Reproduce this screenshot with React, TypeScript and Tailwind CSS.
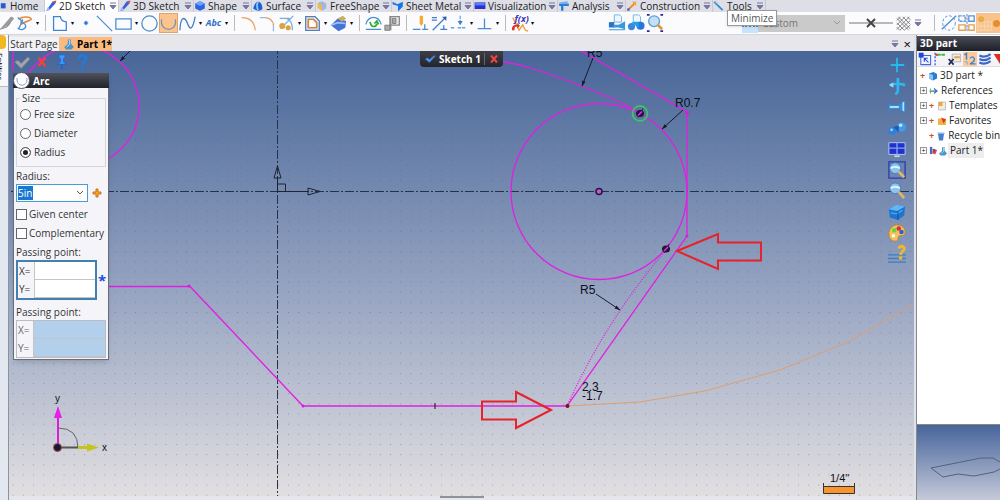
import type { ReactNode } from "react";

const icons: Record<string, ReactNode> = {
  pencil: <><path d="M2 18L13 2l5 3L7 17z" fill="#3a5fdc" /><path d="M2 18l2-6 5 4z" fill="#9fc0f0" /><path d="M13 2l5 3 1-4z" fill="#d2473e" /></>,
  blob: <><path d="M2 6l8-4 8 4v8l-8 4-8-4z" fill="#2b63e0" /><path d="M2 6l8 4 8-4-8-4z" fill="#6ea2ff" /></>,
  surface: <><path d="M2 14C5 4 8 2 11 3c5 1 7 8 6 13-5 3-10 2-15-2z" fill="#1f5fd0" /><path d="M10 3c-2 4-2 9 0 14" stroke="#8fc1ff" strokeWidth="3" fill="none" /></>,
  free: <><path d="M3 5l7-3 7 4v8l-7 4-7-5z" fill="#9db8e4" /><path d="M3 5l7 4v9l-7-5z" fill="#f3b93e" /></>,
  sheet: <path d="M1 3l8 4 9-4v8l-8 8V10L1 7z" fill="#1477e8" />,
  monitor: <><path d="M1 4h18v11H1z" fill="#2733cc" /><path d="M2 5h16v4H2z" fill="#5d7cff" /></>,
  analysis: <><path d="M2 6h16v4H9v8H5v-8H2z" fill="#2f7bd8" /><path d="M2 4l14-2v4H2z" fill="#6fb0f5" /></>,
  construction: <><path d="M3 17L14 6" stroke="#f08a1c" strokeWidth="3" /><path d="M10 3h7v7z" fill="#f0a43c" /><path d="M2 14h4v4H2z" fill="#3c6bd6" /></>,
  tools: <><path d="M2 3l14 14" stroke="#3c86d2" strokeWidth="3" /><path d="M3 2l5 5" stroke="#9ec4e8" strokeWidth="2" /></>,
  home: <path d="M2 3h12v13H2z" fill="#2a5ad0" />,
  trowel: <><path d="M1 18L15 2l4 2-7 9z" fill="#9a9a9a" /><path d="M1 18l9-3 4-5" stroke="#777" fill="none" /></>,
  sketch: <><path d="M3 5c5-4 14-3 15 0-3 3-7 2-12 6" stroke="#e78a3e" strokeWidth="2" fill="none" /><path d="M2 3l6 5M8 5L3 17M5 8c8 2 8 7 3 9-4 1-5-1-6-2" stroke="#4d8fd4" strokeWidth="1.500" fill="none" /></>,
  profile: <path d="M3 2h8q1 6 7 6v10H3z" stroke="#3f86cf" fill="#fafcff" strokeWidth="1.500" />,
  point: <path d="M10 4v12M4 10h12M7 7h6v6H7z" stroke="#2f74dd" fill="#2f74dd" strokeWidth="1.500" />,
  line: <path d="M1 1l18 18" stroke="#4b8dd0" strokeWidth="1.500" />,
  rect: <path d="M1 4.500h18v12H1z" stroke="#4b8dd0" strokeWidth="1.500" fill="none" />,
  circle: <circle cx="10" cy="10" r="9" stroke="#4b8dd0" strokeWidth="1.500" fill="none" />,
  arc: <path d="M2 5C-1 21 21 21 18 5" stroke="#7a94b4" strokeWidth="1.500" fill="none" />,
  spline: <path d="M1 18C2 0 7 2 10 10s6 8 9-8" stroke="#3f7dc4" strokeWidth="1.500" fill="none" />,
  fillet: <path d="M2 3c10 0 15 5 16 15" stroke="#e6a15c" strokeWidth="1.500" fill="none" />,
  corner: <><path d="M1 3h6M17 11v8" stroke="#8fbfe8" strokeWidth="1.500" /><path d="M7 3c5 0 10 4 10 9" stroke="#e6a15c" strokeWidth="1.500" fill="none" /></>,
  trim: <><path d="M2 4h12M18 1L3 16M10 4c6 2 7 7 7 14" stroke="#79aee0" strokeWidth="1.500" fill="none" /><circle cx="5" cy="13" r="3.500" fill="#dca23e" /><circle cx="12" cy="15" r="3" fill="#dca23e" /></>,
  offset: <><path d="M2 2h11l5 5v11H2z" stroke="#4b7fc0" strokeWidth="1.500" fill="#eaf1f8" /><path d="M5 5h6l4 4v6H5z" stroke="#d78237" strokeWidth="2" fill="#fff" /></>,
  solid: <><path d="M1 12l8-8 10 3-1 8-8 4z" fill="#4673d8" /><path d="M1 12l8-3 9 1" stroke="#a4c0ff" strokeWidth="2" fill="none" /><path d="M9 4l6-3 4 3-5 4z" fill="#c9b15a" /></>,
  rotate: <><path d="M1 11C4 0 16 0 19 11M1 17h18" stroke="#4b8dd0" strokeWidth="1.500" fill="none" /><path d="M6 8c1 7 7 7 8 2M11 10l3-3 2 4" stroke="#2fae38" strokeWidth="2" fill="none" /></>,
  flag: <><path d="M7 2h11v10H7zM8 3v15" stroke="#888" strokeWidth="1.500" fill="#e8e8e8" /><path d="M1 12h6v6H1zM10 4h4v6h-4z" fill="#aaa" stroke="#777" /></>,
  dimension: <><path d="M9 1h4v9l-2 3-2-3z" fill="#f0ac34" /><path d="M1 17h9M12 17h7M15 17v-6" stroke="#4b8dd0" strokeWidth="1.500" /></>,
  relation: <><path d="M1 3h6M1 6h6M2 18L18 2M11 17h8M15 17v-5" stroke="#3f7fc8" strokeWidth="1.500" /><path d="M13 2h5v5z" fill="#2a5fa8" /></>,
  attach: <><path d="M1 15h5M9 15h10M12 1v8" stroke="#6aa5dc" strokeWidth="1.500" strokeDasharray="4 1" /><path d="M9 7h6l-3 5z" fill="#3f7fc8" /></>,
  perp: <path d="M2 16h16M10 16V4" stroke="#4b8dd0" strokeWidth="1.500" />,
  plot: <><path d="M2 4l4 8 3 6 4-6 3 6 3 1" stroke="#e8a03c" fill="none" strokeWidth="1.500" /><path d="M1 18c0-6 3-6 6-6v-2l3 3-3 3v-2c-3 0-3 1-3 4z" fill="#dd3427" /></>,
  camera: <><path d="M7 1h6l2 2v6H7z" fill="#edf7ff" stroke="#6cb1e5" /><path d="M1 9h6v6H1z" fill="#2a72c4" /><path d="M6 12h6l7-4v9l-7-2H6zM1 17h18v1H1z" fill="#3b98dc" /></>,
  balls: <><path d="M7 1h6l2 2v6H7z" fill="#edf7ff" stroke="#6cb1e5" /><circle cx="5" cy="14" r="4" fill="#3c87dd" /><circle cx="15" cy="13" r="4.500" fill="#2776d8" /><path d="M5 9h8v7z" fill="#1e9ee9" /></>,
  zoomfit: <><path d="M1 1h3M16 1h3M1 19h3M16 19h3" stroke="#28289a" strokeWidth="2" /><circle cx="9" cy="8" r="6" fill="#c3e0f6" stroke="#5e9fd4" strokeWidth="1.500" /><path d="M13 12l5 5" stroke="#d99a3c" strokeWidth="3" /></>,
  dashed: <><path d="M2 17L18 2" stroke="#4b8dd0" strokeWidth="1.500" /><ellipse cx="10" cy="10" rx="7" ry="8" stroke="#4b8dd0" strokeDasharray="3 2" fill="none" /></>,
  grid4: <><path d="M1 2h7v6H1z" stroke="#5a97d6" strokeDasharray="3 1" strokeWidth="1.500" /><path d="M12 2h6v6h-6z" stroke="#5a97d6" strokeWidth="1.500" /><path d="M1 12h7v6H1zM12 12h6v6h-6z" stroke="#e6a14e" strokeWidth="1.500" /><path d="M10 0v20" stroke="#4c79b8" strokeDasharray="3 1" /></>,
  snap: <><path d="M2 8h16v10H2zM6 8v10M10 8v10M14 8v10M2 13h16" stroke="#f5d9b8" fill="none" /><circle cx="6" cy="5" r="3.500" fill="#e9ac46" /></>,
  check: <path d="M1 10l4-2 4 4 8-8 3 2L9 18z" fill="#a2a6ab" stroke="#83878e" />,
  checkBlue: <path d="M2 10l4-2 3 3 8-7 2 1L9 16z" fill="#4f9bf2" stroke="#2b66b8" />,
  cross: <path d="M4 3l12 14M16 3L4 17" stroke="#f0433c" strokeWidth="4" />,
  pin: <><path d="M6 1h8v3l-2 2v4l4 3H4l4-3V6L6 4z" fill="#3f97f8" stroke="#1c62ca" /><path d="M10 13v6" stroke="#1c62ca" strokeWidth="2" /></>,
  help: <><path d="M6 6c0-6 9-5 9 0 0 3-4 3-4 7" stroke="#1a7fe0" strokeWidth="3" fill="none" /><circle cx="11" cy="17" r="2" fill="#1a7fe0" /></>,
  cyanPlus: <path d="M10 2v16M3 10h15" stroke="#25b9f2" strokeWidth="2" />,
  axisMove: <><path d="M11 1v14q0 3-3 4M2 9q8-3 17 0" stroke="#2fb7f4" strokeWidth="3" fill="none" /><path d="M1 9l5-3v6z" fill="#8be0ff" /></>,
  viewCam: <><path d="M1 6l4 2h7l7-5v13l-7-4H5l-4 2z" fill="#2e8ee2" /><path d="M2 9h10v2H2zM16 5l2-1v11l-2-1z" fill="#a9e0ff" /></>,
  viewBalls: <><circle cx="5" cy="13" r="4.500" fill="#3080da" /><circle cx="15" cy="9" r="5" fill="#3d9cec" /><path d="M6 9l6-2v8z" fill="#1a5fc0" /><circle cx="14" cy="7" r="2" fill="#b6e4ff" /><circle cx="4" cy="12" r="1.500" fill="#9dd2fb" /></>,
  viewGrid: <><path d="M1 3h18v13H1z" fill="#2232c8" stroke="#b9d1ff" /><path d="M10 3v13M1 9h18" stroke="#7ca2ff" strokeWidth="1.500" /><path d="M7 18h6" stroke="#c5cfe4" strokeWidth="2" /></>,
  lensBox: <><path d="M1 1h18v18H1z" fill="none" stroke="#2b3fae" strokeWidth="1.500" /><circle cx="8" cy="8" r="6" fill="#8fc3ee" stroke="#3c7fc4" /><path d="M3 8q5-3 10 0" stroke="#e6f5ff" strokeWidth="2" fill="none" /><path d="M12 12l6 6" stroke="#e0b667" strokeWidth="3" /></>,
  lens: <><circle cx="8" cy="7" r="6" fill="#8fc3ee" stroke="#3c7fc4" /><path d="M3 7q5-3 10 0" stroke="#e6f5ff" strokeWidth="2" fill="none" /><path d="M12 11l6 7" stroke="#e0b667" strokeWidth="3" /></>,
  cube: <><path d="M1 7l8-5 10 2-1 10-7 5-9-3z" fill="#1f74d0" /><path d="M1 7l9 2 9-5-10-2z" fill="#62b8f4" /><path d="M3 11l7 1 6-4" stroke="#3fb0f2" strokeWidth="1.500" /><path d="M11 9v10" stroke="#0e4fa0" /></>,
  palette: <><path d="M10 1c6 0 9 4 9 8s-3 4-6 4 0 6-5 6-7-4-7-8 3-10 9-10z" fill="#f4c25b" stroke="#b98530" /><circle cx="7" cy="7" r="2.500" fill="#6cd13e" /><circle cx="12" cy="5" r="2.500" fill="#dc2c3e" /><circle cx="15" cy="9" r="2.500" fill="#2f5fd0" /><circle cx="6" cy="13" r="2" fill="#fff" /></>,
  linesHelp: <><path d="M0 11h20M0 15h20M0 19h20" stroke="#3b7fc4" strokeWidth="1.500" /><path d="M12 4c1-4 7-3 6 1-1 2-4 2-4 6" stroke="#f0bb23" strokeWidth="3" fill="none" /><circle cx="14" cy="14.500" r="2" fill="#f0bb23" /></>,
  part: <><path d="M8 2h5v7l5 6-4 4H5l-3-4 6-5z" fill="#4b95c8" /><path d="M9 3h2v8l-5 4" stroke="#bfe1f4" strokeWidth="1.500" fill="none" /></>,
  treeSelect: <><path d="M4 5h14v13H4z" fill="#eef3ff" stroke="#4a63d8" strokeWidth="1.500" /><path d="M1 1h7v7H1z" fill="#2343d8" /><path d="M9 9l6 6M9 14V9h5" stroke="#2343d8" strokeWidth="1.500" fill="none" /></>,
  treeList: <><path d="M3 1v18" stroke="#3a68d8" strokeWidth="2" strokeDasharray="3 2" /><path d="M6 4h12" stroke="#40b840" strokeWidth="3" strokeDasharray="5 1" /><circle cx="5" cy="4" r="2" fill="#dc4b32" /></>,
  treeDelete: <><path d="M6 3h12v11H6z" fill="#f5ead4" stroke="#9aa3b8" /><path d="M9 6h8v3H9z" fill="#dca75b" /><path d="M1 10l7 8M8 10l-7 8" stroke="#222a55" strokeWidth="2.500" /></>,
  treeNum: <><path d="M2 4l3-2v9M10 9q4-4 6 0t-6 8h8" stroke="#3b86d2" strokeWidth="2" fill="none" /><path d="M2 14h4v4" stroke="#5fa0dc" fill="none" /></>,
  layers: <path d="M2 5q8 4 16-2M2 10q8 4 16-2M2 15q8 4 16-2" stroke="#3d67c4" strokeWidth="3" fill="none" />,
  filter: <path d="M1 3h18l-9 14z" fill="#dc2d25" />,
  cubeSmall: <><path d="M2 5l9-3 7 4v9l-8 4-8-4z" fill="#2c7bd0" /><path d="M2 5l8 3v10l-8-3z" fill="#8cc5f0" /></>,
  refs: <><path d="M1 10h14M10 5l6 5-6 5" stroke="#3d75bc" strokeWidth="2.500" fill="none" /><path d="M3 5v10" stroke="#76b852" strokeWidth="2" /></>,
  doc: <><path d="M3 2h14v16H3z" fill="#f6ecd2" stroke="#8a93ac" /><path d="M3 2h8v8H3z" fill="#eba54a" /></>,
  fav: <><path d="M2 5h16v13H2z" fill="#f3b244" /><path d="M8 3l10 4-5 8z" fill="#d93a32" /></>,
  bin: <><path d="M4 5h12l-2 14H6z" fill="#477fd0" /><path d="M3 3h14v3H3z" fill="#8db6ee" /></>,
  partDoc: <><path d="M2 2h5v16H2z" fill="#4f68c8" /><path d="M8 6l10 3-4 10-7-3z" fill="#d24a50" /><path d="M8 6l6 2-2 6z" fill="#3a50b8" /></>,
  hatch: <path d="M1 3l16 16M1 9l10 10M1 15l4 4M3 1l16 16M9 1l10 10M15 1l4 4M1 6l5-5M1 12L12 1M1 18L18 1M5 19L19 6M11 19l8-7" stroke="#666" />,
};

function Icon({ name, className = "size-4" }: { name: string; className?: string }) {
  return <svg viewBox="0 0 20 20" className={`${className} shrink-0`} fill="none" aria-hidden="true">{icons[name]}</svg>;
}

const tabs = [
  { label: "Home", icon: "home", width: "w-[45px]", caret: false },
  { label: "2D Sketch", icon: "pencil", width: "w-[74px]", caret: true },
  { label: "3D Sketch", icon: "pencil", width: "w-[75px]", caret: true },
  { label: "Shape", icon: "blob", width: "w-[58px]", caret: true },
  { label: "Surface", icon: "surface", width: "w-[64px]", caret: true },
  { label: "FreeShape", icon: "free", width: "w-[76px]", caret: true },
  { label: "Sheet Metal", icon: "sheet", width: "w-[82px]", caret: true },
  { label: "Visualization", icon: "monitor", width: "w-[84px]", caret: true },
  { label: "Analysis", icon: "analysis", width: "w-[68px]", caret: true },
  { label: "Construction", icon: "construction", width: "w-[87px]", caret: true },
  { label: "Tools", icon: "tools", width: "w-[53px]", caret: true },
];

const tools = [
  "sketch", ">", "|", "profile", ">", "point", "line", "rect", ">", "circle", "arc", "spline", ">", "Abc", ">", "|",
  "fillet", "corner", "trim", ">", "offset", ">", "solid", ">", "|", "rotate", "flag", "|",
  "dimension", "relation", "attach", ">", "perp", ">", "|", "plot", ">",
];

const views = ["cyanPlus", "axisMove", "viewCam", "viewBalls", "viewGrid", "lensBox", "lens", "cube", "palette", "linesHelp"];

const tree = [
  { label: "3D part *", icon: "cubeSmall", expand: false, plus: true, indent: false },
  { label: "References", icon: "refs", expand: true, plus: false, indent: false },
  { label: "Templates", icon: "doc", expand: true, plus: true, indent: false },
  { label: "Favorites", icon: "fav", expand: true, plus: true, indent: false },
  { label: "Recycle bin", icon: "bin", expand: false, plus: true, indent: true },
];

function Caret() {
  return (
    <svg viewBox="0 0 8 8" className="h-2 w-2 shrink-0" aria-hidden="true">
      <path d="M1 1h6M1 3.500h6L4 7z" stroke="#7876a0" fill="#7876a0" />
    </svg>
  );
}

function Ribbon() {
  return (
    <nav className="relative flex h-3 shrink-0 items-center bg-[#dedee6] text-[10px] leading-3">
      {tabs.map((t) => (
        <button key={t.label} className={`flex h-3 shrink-0 items-center gap-[2px] border-r border-[#c9c9d4] whitespace-nowrap text-[#222] ${t.width} ${t.label === "2D Sketch" ? "bg-white" : ""}`}>
          <Icon name={t.icon} className={t.label === "Home" ? "size-2" : "size-3"} />
          <span>{t.label}</span>
          {t.caret && <span className="mr-px ml-auto"><Caret /></span>}
        </button>
      ))}
      <div role="tooltip" className="absolute top-[10px] left-[727px] z-20 border border-[#999] bg-white px-[3px] text-[10px] leading-[14px] text-[#555] shadow">
        Minimize
      </div>
    </nav>
  );
}

function Tool({ name }: { name: string }) {
  if (name === "|") return <span className="mx-1 h-4 w-px shrink-0 bg-[#bbb]" />;
  if (name === ">") return <button aria-label="More" className="w-[7px] shrink-0 text-[6px] leading-3">▾</button>;
  return (
    <button aria-label={name} className={`flex h-5 w-[19px] shrink-0 items-center justify-center ${name === "arc" ? "border border-[#e0a56e] bg-[#fac48c]" : ""}`}>
      {name === "Abc" ? (
        <span className="text-[9px] font-bold text-[#2f6fc0] italic">Abc</span>
      ) : name === "plot" ? (
        <span className="relative">
          <Icon name="plot" className="size-[18px]" />
          <span className="absolute -top-px left-1 text-[9px] leading-3 font-bold text-[#3a35b8] italic">f(x)</span>
        </span>
      ) : (
        <Icon name={name} className={name === "point" ? "size-2" : "size-[17px]"} />
      )}
    </button>
  );
}

function Toolbar() {
  return (
    <div className="flex h-[23px] shrink-0 items-center overflow-hidden border-b border-[#d5d5dc] bg-[#fbfbfe]">
      <Icon name="trowel" className="-ml-px size-4" />
      {tools.map((t, i) => <Tool key={i} name={t} />)}
      <div className="ml-[72px] flex shrink-0 items-center gap-px">
        <Icon name="camera" className="size-[18px]" />
        <Icon name="balls" className="size-[18px]" />
        <Icon name="zoomfit" className="size-[18px]" />
      </div>
      <div className="ml-auto flex h-full shrink-0 items-center">
        <div className="mt-3 h-2 w-4 border-t-2 border-dotted border-[#4b8dd0] bg-[#c9e4f8]" />
        <div className="mr-1 flex h-[17px] w-[87px] items-center bg-[#cacaca] pr-1 pl-1">
          <select aria-label="Style" disabled className="min-w-0 flex-1 appearance-none text-[10px] text-[#777]">
            <option>Custom</option>
          </select>
          <svg viewBox="0 0 8 8" className="size-2" aria-hidden="true"><path d="M1 2l3 3 3-3" stroke="#999" fill="none" /></svg>
        </div>
        <svg className="h-4 w-[44px]" viewBox="0 0 44 16" aria-hidden="true">
          <path d="M0 8h44" stroke="#777" />
          <path d="M18 4l8 8M26 4l-8 8" stroke="#444" strokeWidth="2" />
        </svg>
        <Icon name="hatch" className="mx-[3px] size-[15px]" />
        <Caret />
        <span className="mr-[5px] ml-3 h-4 w-px bg-[#bbb]" />
        <Icon name="dashed" className="size-[18px]" />
        <Icon name="grid4" className="size-[18px]" />
        <div className="flex h-5 w-6 items-center bg-[#fbc38c]">
          <Icon name="snap" className="size-[17px]" />
          <span className="size-[7px] rounded-full bg-[#e88d2c]" />
        </div>
      </div>
    </div>
  );
}

function Marker({ x, y }: { x: number; y: number }) {
  return (
    <g transform={`translate(${x} ${y})`}>
      <ellipse rx="4" ry="3.500" fill="#25133a" />
      <path d="M-4 0q4-4 8 0M-2 4L3-5" stroke="#25133a" />
      <path d="M-2 2L2-2" stroke="#e636e6" strokeWidth="1.500" />
    </g>
  );
}

function Drawing() {
  return (
    <svg className="absolute inset-0 h-full w-full" aria-label="Sketch 1 drawing">
      <defs>
        <pattern id="dots" x="3.600" y="7.300" width="10.200" height="10.150" patternUnits="userSpaceOnUse">
          <rect width="1" height="1" fill="#4f5b78" opacity="0.450" />
        </pattern>
        <marker id="tip" viewBox="0 0 10 6" refX="9" refY="3" markerWidth="6" markerHeight="4" orient="auto">
          <path d="M0 0l10 3L0 6z" fill="#151b2b" />
        </marker>
      </defs>
      <rect width="100%" height="100%" fill="url(#dots)" />
      <g transform="translate(-9 -51)" fill="none">
        <g stroke="#26324a" strokeDasharray="9 2 2 2">
          <path d="M0 191.500H3000" />
          <path d="M277.500 0V2000" />
        </g>
        <g stroke="#1d2433">
          <path d="M277.500 191.500v-14M274 178l3.500-12 3.500 12zM277.500 191.500h31M308 188l12 3.500-12 3.500zM277.500 184h8v7.500" />
        </g>

        <g stroke="#e11fe1" strokeWidth="1.300">
          <circle cx="79" cy="106" r="60" />
          <path d="M13 51v20" />
          <path d="M100 286.500h90L303 406h264l120-170V112L578 49" />
          <path d="M500 61l20 4 20 6 42 15 38 16 20 11" />
          <circle cx="599" cy="191.500" r="88" />
          <path d="M666 250q-60 70-99 156" strokeDasharray="1 1.500" />
        </g>
        <g fill="#d41fd4">
          <circle cx="189" cy="286" r="1.500" />
          <circle cx="303" cy="406" r="1.500" />
          <circle cx="687" cy="236" r="1.500" />
          <circle cx="687" cy="113" r="2" />
        </g>
        <path d="M567 406l73-4 65-11 75-21 70-29 55-32 30-18" stroke="#dd9f6e" />
        <path d="M435 403v6" stroke="#111" />
        <circle cx="567.500" cy="406" r="2" fill="#7a1020" />
        <circle cx="599" cy="191.500" r="3" fill="#c05ad0" stroke="#2a1440" strokeWidth="1.500" />
        <Marker x={640} y={113.500} />
        <circle cx="640" cy="113.500" r="7.500" stroke="#2fd35c" strokeWidth="1.500" />
        <Marker x={666} y={249} />

        <g stroke="#151b2b">
          <path d="M593 58l-11 28" markerEnd="url(#tip)" />
          <path d="M683 110l-21 19" markerEnd="url(#tip)" />
          <path d="M596 294l24 16" markerEnd="url(#tip)" />
          <path d="M130 51l-10 10" markerEnd="url(#tip)" />
        </g>
        <g fill="#0c101a" fontSize="12" className="font-['Liberation_Sans',sans-serif]">
          <text x="587" y="57">R5</text>
          <text x="675" y="107">R0.7</text>
          <text x="580" y="294">R5</text>
          <text x="582" y="391">2.3</text>
          <text x="582" y="400">-1.7</text>
          <text x="55" y="402" fontSize="10">y</text>
          <text x="102" y="451" fontSize="10">x</text>
          <text x="830" y="482" fontSize="11">1/4"</text>
        </g>

        <g stroke="#e8222a" strokeWidth="2">
          <path d="M677 251l41-17v8.500h43v18h-43v8.500z" />
          <path d="M551 410l-35-18v9.500h-34v18h34v8.500z" />
        </g>

        <path d="M58 428q20 0 20 20" stroke="#666" />
        <path d="M58 448v-32" stroke="#d81fd8" strokeWidth="2" />
        <path d="M54 418l4-12 4 12z" fill="#e81fe8" />
        <path d="M58 447.500h20" stroke="#555" strokeWidth="2" />
        <path d="M78 447.500h10" stroke="#c4c41c" strokeWidth="3" />
        <path d="M87 443.500l12 4-12 4z" fill="#c4c41c" />
        <circle cx="57.500" cy="447.500" r="4" fill="#18183c" stroke="#a0583c" />
        <path d="M823.500 486.500h31v7h-31z" fill="#f7952f" stroke="#333" />
        <path d="M823.500 483v4M854.500 483v4" stroke="#333" />
      </g>
    </svg>
  );
}

function PointFields({ id, disabled = false }: { id: string; disabled?: boolean }) {
  return (
    <div className={`flex-1 border ${disabled ? "border-[#bcbcc4] text-[#666]" : "border-2 border-[#4280b0]"}`}>
      {["X", "Y"].map((axis) => (
        <div key={axis} className="flex h-[18px] items-center">
          <label htmlFor={id + axis} className="w-4 shrink-0 pl-px">{axis}=</label>
          <input id={id + axis} disabled={disabled} className={`h-full w-full min-w-0 border border-r-0 border-t-0 border-[#c4c4c4] ${disabled ? "bg-[#b2cfec]" : "bg-white"}`} />
        </div>
      ))}
    </div>
  );
}

function ArcDialog() {
  return (
    <form className="absolute top-[22px] left-1 w-24 border border-[#686d7c] bg-[#f5f5f9] text-[10px] leading-4 text-[#333] shadow-md">
      <header className="-mx-px -mt-px flex h-[15px] items-center bg-gradient-to-b from-[#50525c] to-[#22242c] font-bold text-white">
        <span className="flex size-[17px] items-center justify-center rounded-full border border-[#555] bg-white">
          <Icon name="arc" className="size-3" />
        </span>
        <span className="pl-[3px]">Arc</span>
      </header>
      <div className="flex flex-col px-[2px]">
        <fieldset className="mt-[2px] h-[77px] border border-[#d5d5dc] px-[3px]">
          <legend className="px-[2px]">Size</legend>
          <div className="flex flex-col gap-[3px]">
            {["Free size", "Diameter", "Radius"].map((label) => (
              <label key={label} className="flex items-center gap-[3px]">
                <input type="radio" name="size" defaultChecked={label === "Radius"} className="size-[11px] appearance-none rounded-full border border-[#666] bg-white checked:bg-[#222] checked:shadow-[inset_0_0_0_2px_white]" />
                {label}
              </label>
            ))}
          </div>
        </fieldset>
        <label htmlFor="radius" className="mt-px">Radius:</label>
        <div className="flex items-center gap-1">
          <div className="flex h-[18px] w-[72px] items-center border border-[#4b9bd6] bg-white px-px">
            <input id="radius" defaultValue="5in" className="h-[14px] w-[15px] bg-[#1878d0] text-white" />
            <button type="button" aria-label="Radius values" className="mr-[2px] ml-auto">
              <svg viewBox="0 0 8 8" className="size-2"><path d="M1 2l3 3 3-3" stroke="#555" fill="none" /></svg>
            </button>
          </div>
          <svg viewBox="0 0 10 10" className="size-[10px]"><path d="M4 1h2v3h3v2H6v3H4V6H1V4h3z" fill="#f6a431" stroke="#c9761a" /></svg>
        </div>
        <div className="mt-1 flex flex-col gap-[3px]">
          {["Given center", "Complementary"].map((label) => (
            <label key={label} className="flex items-center gap-[2px] whitespace-nowrap">
              <input type="checkbox" className="size-[11px] shrink-0 appearance-none border border-[#666] bg-white" />
              {label}
            </label>
          ))}
        </div>
        <span className="mt-[3px]">Passing point:</span>
        <div className="flex items-center gap-px">
          <PointFields id="first" />
          <span className="w-2 text-[15px] font-bold text-[#1c50dc]">*</span>
        </div>
        <span className="mt-1">Passing point:</span>
        <div className="flex pb-px"><PointFields id="second" disabled /></div>
      </div>
    </form>
  );
}

function Canvas() {
  return (
    <main className="relative min-h-0 flex-1 overflow-hidden bg-gradient-to-b from-[#486698] via-[#909fbe] to-[#e2dfe1]">
      <Drawing />
      <div className="absolute top-[3px] left-[5px] flex gap-1">
        {["check", "cross", "pin", "help"].map((n) => (
          <button key={n} aria-label={n} className="flex h-4 w-4 items-center justify-center"><Icon name={n} className={n === "cross" ? "size-3" : "size-4"} /></button>
        ))}
      </div>
      <ArcDialog />
      <div className="absolute top-0 left-[411px] flex h-4 w-[83px] items-center rounded-b bg-gradient-to-b from-[#3d3f48] to-[#24252c] px-1 text-[10px] font-bold text-white">
        <Icon name="checkBlue" className="size-3" />
        <span className="pl-[3px]">Sketch 1</span>
        <span className="ml-auto h-3 w-px bg-[#666]" />
        <button aria-label="Close sketch" className="ml-1"><Icon name="cross" className="size-[10px]" /></button>
      </div>
      <div className="absolute top-1 right-2 flex flex-col gap-px">
        {views.map((v) => (
          <button key={v} aria-label={v} className="flex h-5 items-center">
            <Icon name={v} className="size-[18px]" />
          </button>
        ))}
      </div>
    </main>
  );
}

function SidePanel() {
  return (
    <aside className="flex w-[83px] shrink-0 flex-col overflow-hidden bg-white text-[10px]">
      <h2 className="mt-px h-[15px] bg-gradient-to-b from-[#4b4d58] to-[#1e2028] pl-[3px] leading-[14px] font-bold text-white">3D part</h2>
      <div className="flex h-4 shrink-0 items-center gap-px border-b border-[#ddd] bg-[#f4f4f8] pl-px">
        {["treeSelect", "treeList", "treeDelete", "treeNum", "layers", "filter"].map((n) => (
          <button key={n} aria-label={n} className={n === "treeNum" ? "bg-[#fbcb9b]" : ""}><Icon name={n} className="size-[14px]" /></button>
        ))}
      </div>
      <ul className="flex-1 pt-px pl-[3px] leading-[15px] whitespace-nowrap text-[#222]">
        {tree.map((row) => (
          <li key={row.label} className={`flex h-[15px] items-center gap-[2px] ${row.indent ? "pl-[9px]" : ""}`}>
            {row.expand && <button aria-label={`Expand ${row.label}`} className="flex size-[7px] items-center justify-center border border-[#999] text-[7px] leading-none">+</button>}
            {row.plus && <span className="w-[6px] text-[9px] font-bold text-[#c7502c]">+</span>}
            <Icon name={row.icon} className="size-[10px]" />
            <span>{row.label}</span>
          </li>
        ))}
        <li className="flex h-[15px] items-center">
          <button aria-label="Expand Part 1" className="mr-[2px] flex size-[7px] items-center justify-center border border-[#999] text-[7px] leading-none">+</button>
          <Icon name="partDoc" className="size-[9px]" />
          <Icon name="part" className="size-[10px]" />
          <span className="bg-[#ededed] pr-px pl-[2px]">Part 1*</span>
        </li>
      </ul>
      <div className="h-[76px] shrink-0 border-t border-[#888] bg-gradient-to-b from-[#48659b] to-[#c6cad9]">
        <svg viewBox="0 0 83 75" className="h-full w-full" fill="none" aria-label="Part preview">
          <path d="M14 43l35-7 15-3h12l7 4M14 43l12 9 15-3 16 2 20-4 6-3" stroke="#56617c" />
        </svg>
      </div>
    </aside>
  );
}

export default function App() {
  return (
    <div className="flex h-screen flex-col overflow-hidden bg-[#e6e6eb] font-['Open_Sans','Noto_Sans',sans-serif]">
      <Ribbon />
      <Toolbar />
      <div className="flex min-h-0 flex-1">
        <aside className="w-[9px] shrink-0 overflow-hidden border-r border-[#8b93a3] bg-[#e3e7ef]">
          <div className="h-[52px] border-b border-[#bbb] bg-[#f8f8fb]">
            <div className="mb-1 h-[14px] w-[6px] rounded-r bg-[#f2b822]" />
            <span className="-ml-1 block text-[8px] leading-[9px] [writing-mode:vertical-rl]">Entities</span>
          </div>
        </aside>
        <div className="flex min-w-0 flex-1 flex-col">
          <div className="flex h-4 shrink-0 items-end text-[10px] leading-[14px]">
            <button className="h-[14px] w-[50px] bg-[#f2f2f5] text-[#333]">Start Page</button>
            <button className="flex h-[14px] w-[53px] items-center gap-[2px] bg-[#f9bb80] pl-1 font-bold whitespace-nowrap">
              <Icon name="part" className="size-3" />
              Part 1*
            </button>
            <button aria-label="Windows" className="mr-[5px] ml-auto h-[14px] text-[#444]"><Caret /></button>
            <button aria-label="Close" className="h-[14px] pr-[3px] text-[13px]">×</button>
          </div>
          <Canvas />
          <div className="flex h-1 shrink-0 justify-center bg-[#e4e6ec]">
            <span className="h-[2px] w-11 bg-[#8f939c]" />
          </div>
        </div>
        <div className="w-[3px] shrink-0 border-r border-[#888] bg-[#dfe2ea]" />
        <SidePanel />
      </div>
    </div>
  );
}
